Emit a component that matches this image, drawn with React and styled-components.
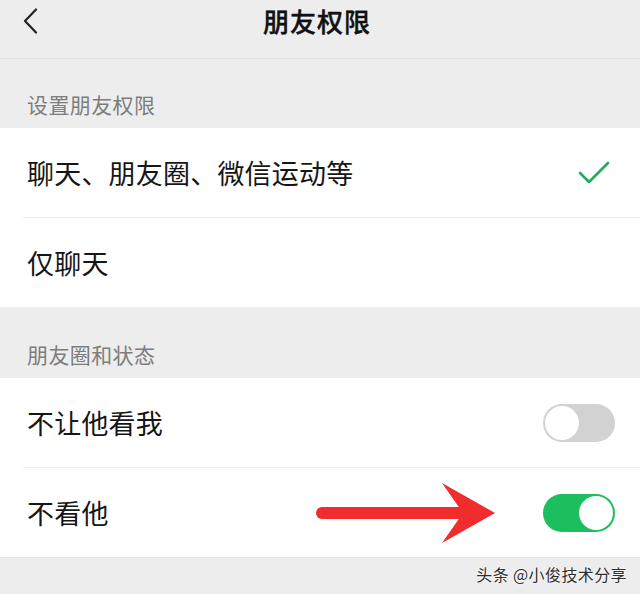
import React from 'react';
import styled, { createGlobalStyle } from 'styled-components';

const GlobalStyle = createGlobalStyle`
  html, body {
    margin: 0;
    padding: 0;
    background: #ededed;
  }
  body {
    font-family: "Noto Sans CJK SC", "Noto Sans", sans-serif;
    color: #1a1a1a;
  }
`;

const Page = styled.div`
  width: 640px;
  height: 594px;
  overflow: hidden;
  background: #ededed;
  display: flex;
  flex-direction: column;
`;

const Header = styled.div`
  height: 58px;
  border-bottom: 1px solid #e3e3e3;
  position: relative;
  display: flex;
  align-items: flex-start;
  justify-content: center;
`;

const HeaderBar = styled.div`
  height: 42px;
  width: 100%;
  display: flex;
  align-items: center;
  justify-content: center;
  position: relative;
`;

const BackButton = styled.div`
  position: absolute;
  left: 22px;
  top: 8px;
  width: 20px;
  height: 26px;
  display: flex;
  align-items: center;
`;

const Title = styled.h1`
  margin: 0;
  font-size: 26px;
  font-weight: 500;
  letter-spacing: 1px;
  color: #111;
  line-height: 42px;
  margin-left: -6px;
  -webkit-text-stroke: 0.4px #111;
`;

const SectionLabel = styled.div`
  height: ${p => p.$h}px;
  display: flex;
  align-items: flex-end;
  padding: 0 27px 10px;
  box-sizing: border-box;
  font-size: 21px;
  color: #7d7d7d;
  line-height: 28px;
  letter-spacing: 0.4px;
`;

const Group = styled.div`
  background: #fff;
  display: flex;
  flex-direction: column;
`;

const Row = styled.div`
  height: ${p => p.$h || 90}px;
  display: flex;
  align-items: center;
  justify-content: space-between;
  padding: 0 25px 0 27px;
  box-sizing: border-box;
  position: relative;
  ${p => p.$divider && `
    &::after {
      content: '';
      position: absolute;
      left: 23px;
      right: 0;
      bottom: 0;
      height: 1px;
      background: #ececec;
    }
  `}
`;

const RowText = styled.span`
  font-size: 27px;
  line-height: 36px;
  color: #161616;
  letter-spacing: 0.2px;
`;

const Toggle = styled.div`
  width: 72px;
  height: 38px;
  border-radius: 19px;
  box-sizing: border-box;
  background: ${p => (p.$on ? '#1dbe5d' : '#d2d2d2')};
  position: relative;
  flex-shrink: 0;
`;

const Knob = styled.div`
  position: absolute;
  top: 2px;
  ${p => (p.$on ? 'right: 2px;' : 'left: 2px;')}
  width: 34px;
  height: 34px;
  border-radius: 50%;
  background: #fff;
`;

const Footer = styled.div`
  flex: 1;
  display: flex;
  justify-content: flex-end;
  align-items: center;
  padding: 0 13px 4px 0;
  border-top: 1px solid #e6e6e6;
`;

const Watermark = styled.span`
  font-size: 16px;
  color: #2f2f2f;
  letter-spacing: 0.4px;
  text-shadow: 0 0 2px #fff, 0 0 2px #fff;
`;

const ArrowMark = styled.svg`
  position: absolute;
  left: 310px;
  top: 10px;
  pointer-events: none;
`;

const BackIcon = () => (
  <svg width="16" height="26" viewBox="0 0 16 26">
    <path d="M14 1.5 L3 13 L14 24.5" fill="none" stroke="#222" strokeWidth="2.2" strokeLinecap="round" strokeLinejoin="round" />
  </svg>
);

const Check = () => (
  <svg width="34" height="26" viewBox="0 0 34 26" style={{ marginRight: 4 }}>
    <path d="M3 13 L12 22 L31 3" fill="none" stroke="#1aad5c" strokeWidth="2.6" strokeLinecap="round" strokeLinejoin="round" />
  </svg>
);

const Switch = ({ on }) => (
  <Toggle $on={on}>
    <Knob $on={on} />
  </Toggle>
);

const RedArrow = () => (
  <ArrowMark width="200" height="70" viewBox="0 0 200 70">
    <line x1="12" y1="35" x2="160" y2="35" stroke="#f02c2c" strokeWidth="12" strokeLinecap="round" />
    <path d="M132 5 L185 35 L132 65 L153 35 Z" fill="#f02c2c" />
  </ArrowMark>
);

export default function App() {
  return (
    <>
      <GlobalStyle />
      <Page>
        <Header>
          <HeaderBar>
            <BackButton>
              <BackIcon />
            </BackButton>
            <Title>朋友权限</Title>
          </HeaderBar>
        </Header>

        <SectionLabel $h={69}>设置朋友权限</SectionLabel>
        <Group>
          <Row $divider>
            <RowText>聊天、朋友圈、微信运动等</RowText>
            <Check />
          </Row>
          <Row $h={89}>
            <RowText>仅聊天</RowText>
          </Row>
        </Group>

        <SectionLabel $h={71}>朋友圈和状态</SectionLabel>
        <Group>
          <Row $divider>
            <RowText>不让他看我</RowText>
            <Switch on={false} />
          </Row>
          <Row $h={89}>
            <RowText>不看他</RowText>
            <RedArrow />
            <Switch on />
          </Row>
        </Group>

        <Footer>
          <Watermark>头条 @小俊技术分享</Watermark>
        </Footer>
      </Page>
    </>
  );
}
